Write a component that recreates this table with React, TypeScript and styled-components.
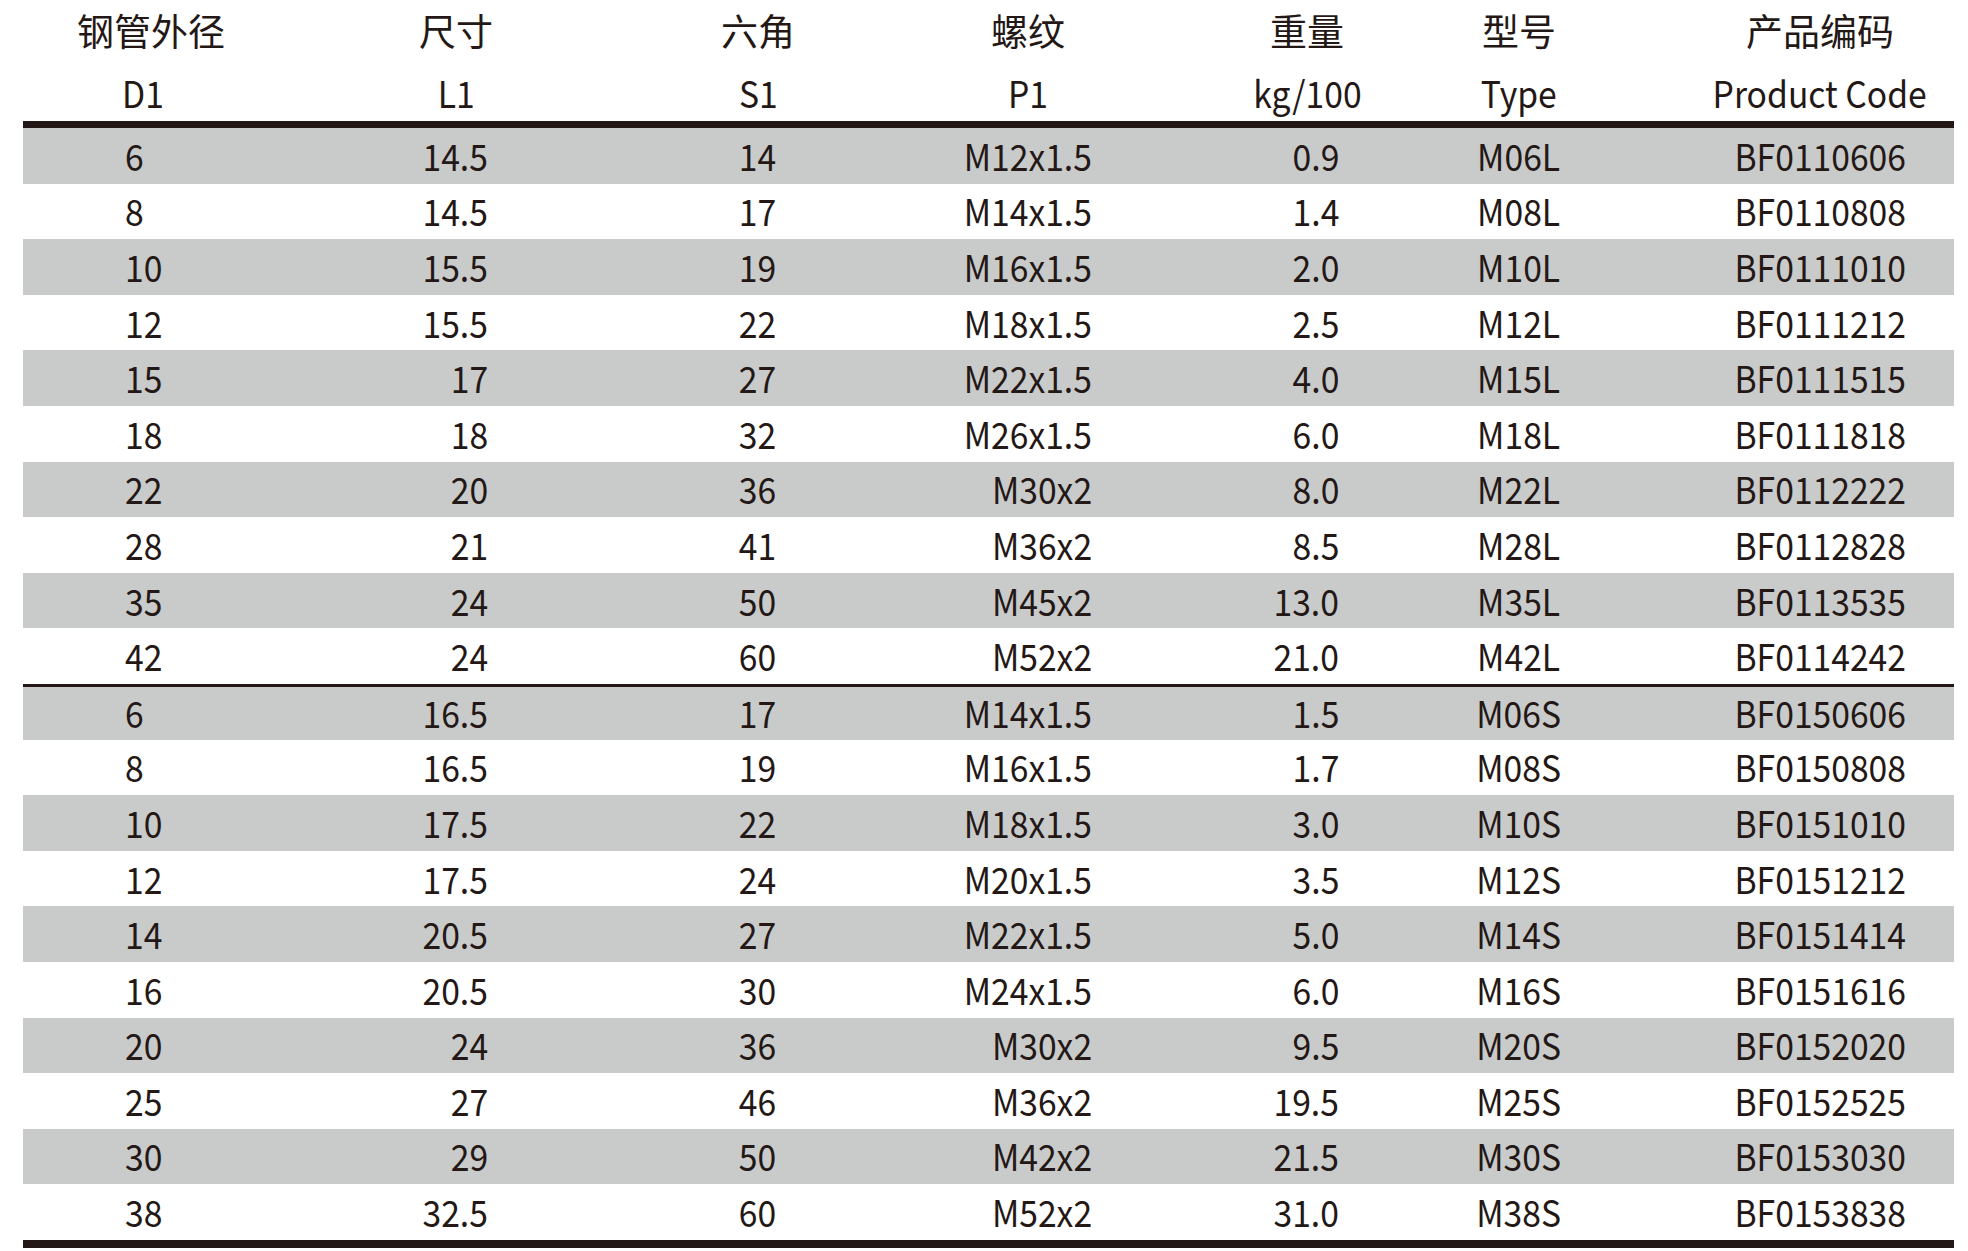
import React from 'react';
import styled, { createGlobalStyle } from 'styled-components';

const GlobalStyle = createGlobalStyle`
  html, body {
    margin: 0;
    padding: 0;
    background: #fff;
  }
  body {
    font-family: "Noto Sans CJK SC", "Noto Sans", sans-serif;
    color: #231815;
  }
`;

type Align = 'left' | 'center' | 'right';

interface Col {
  width: number;
  align: Align;
  box: number;
  pad: number;
}

// widths chosen so that each column's centre sits under its heading
const columns: Col[] = [
  { width: 240, align: 'left', box: 36, pad: 0 },
  { width: 386, align: 'right', box: 64, pad: 0 },
  { width: 218, align: 'center', box: 80, pad: 0 },
  { width: 322, align: 'right', box: 128, pad: 0 },
  { width: 236, align: 'right', box: 64, pad: 0 },
  { width: 188, align: 'center', box: 100, pad: 0 },
  { width: 341, align: 'center', box: 200, pad: 73 },
];

const headings = [
  ['钢管外径', 'D1', 16],
  ['尺寸', 'L1', 0],
  ['六角', 'S1', 0],
  ['螺纹', 'P1', 0],
  ['重量', 'kg/100', 0],
  ['型号', 'Type', 0],
  ['产品编码', 'Product Code', 0],
] as const;

const groupL = [
  ['6', '14.5', '14', 'M12x1.5', '0.9', 'M06L', 'BF0110606'],
  ['8', '14.5', '17', 'M14x1.5', '1.4', 'M08L', 'BF0110808'],
  ['10', '15.5', '19', 'M16x1.5', '2.0', 'M10L', 'BF0111010'],
  ['12', '15.5', '22', 'M18x1.5', '2.5', 'M12L', 'BF0111212'],
  ['15', '17', '27', 'M22x1.5', '4.0', 'M15L', 'BF0111515'],
  ['18', '18', '32', 'M26x1.5', '6.0', 'M18L', 'BF0111818'],
  ['22', '20', '36', 'M30x2', '8.0', 'M22L', 'BF0112222'],
  ['28', '21', '41', 'M36x2', '8.5', 'M28L', 'BF0112828'],
  ['35', '24', '50', 'M45x2', '13.0', 'M35L', 'BF0113535'],
  ['42', '24', '60', 'M52x2', '21.0', 'M42L', 'BF0114242'],
];

const groupS = [
  ['6', '16.5', '17', 'M14x1.5', '1.5', 'M06S', 'BF0150606'],
  ['8', '16.5', '19', 'M16x1.5', '1.7', 'M08S', 'BF0150808'],
  ['10', '17.5', '22', 'M18x1.5', '3.0', 'M10S', 'BF0151010'],
  ['12', '17.5', '24', 'M20x1.5', '3.5', 'M12S', 'BF0151212'],
  ['14', '20.5', '27', 'M22x1.5', '5.0', 'M14S', 'BF0151414'],
  ['16', '20.5', '30', 'M24x1.5', '6.0', 'M16S', 'BF0151616'],
  ['20', '24', '36', 'M30x2', '9.5', 'M20S', 'BF0152020'],
  ['25', '27', '46', 'M36x2', '19.5', 'M25S', 'BF0152525'],
  ['30', '29', '50', 'M42x2', '21.5', 'M30S', 'BF0153030'],
  ['38', '32.5', '60', 'M52x2', '31.0', 'M38S', 'BF0153838'],
];

const template = columns.map(c => `${c.width}px`).join(' ');

const App = () => {
  const renderRow = (row: string[], i: number, divider: boolean) => (
    <Row key={i} $striped={i % 2 === 0} $divider={divider}>
      {row.map((v, j) => (
        <Cell key={j} $pad={columns[j].pad}>
          <Val $box={columns[j].box} $align={columns[j].align}>
            <Squeeze $align={columns[j].align}>{v}</Squeeze>
          </Val>
        </Cell>
      ))}
    </Row>
  );

  return (
    <>
      <GlobalStyle />
      <Sheet>
        <HeadRow>
          {headings.map(([zh, , shift], j) => (
            <HeadCell key={j} $pad={columns[j].pad + shift}>
              {zh}
            </HeadCell>
          ))}
        </HeadRow>
        <SubHeadRow>
          {headings.map(([, en], j) => (
            <HeadCell key={j} $pad={columns[j].pad}>
              <Squeeze $align="center">{en}</Squeeze>
            </HeadCell>
          ))}
        </SubHeadRow>
        <Body>
          {groupL.map((r, i) => renderRow(r, i, false))}
          {groupS.map((r, i) => renderRow(r, i + 10, i === 0))}
        </Body>
      </Sheet>
    </>
  );
};

export default App;

const Sheet = styled.div`
  width: 1931px;
  margin-left: 23px;
  display: flex;
  flex-direction: column;
`;

const HeadRow = styled.div`
  display: grid;
  grid-template-columns: ${template};
  height: 60px;
  align-items: center;
  font-size: 37px;
  line-height: 1;
`;

const SubHeadRow = styled(HeadRow)`
  height: 61px;
  padding-top: 3px;
  box-sizing: border-box;
`;

const HeadCell = styled.div<{ $pad: number }>`
  display: flex;
  justify-content: center;
  padding-left: ${p => p.$pad}px;
  white-space: nowrap;
`;

const Body = styled.div`
  border-top: 7px solid #231815;
  border-bottom: 8px solid #231815;
`;

const Row = styled.div<{ $striped: boolean; $divider: boolean }>`
  display: grid;
  grid-template-columns: ${template};
  height: 55.6px;
  box-sizing: border-box;
  align-items: center;
  background: ${p => (p.$striped ? '#c9caca' : '#fff')};
  border-top: ${p => (p.$divider ? '3px solid #231815' : 'none')};
  font-size: 37px;
  line-height: 1;
  padding-bottom: 1px;
`;

const Cell = styled.div<{ $pad: number }>`
  display: flex;
  justify-content: center;
  padding-left: ${p => p.$pad}px;
`;

const Val = styled.div<{ $box: number; $align: Align }>`
  width: ${p => p.$box}px;
  display: flex;
  justify-content: ${p =>
    p.$align === 'left' ? 'flex-start' : p.$align === 'right' ? 'flex-end' : 'center'};
  white-space: nowrap;
`;

const Squeeze = styled.span<{ $align: Align }>`
  display: inline-block;
  transform: scaleX(0.91);
  transform-origin: ${p => p.$align} center;
`;
